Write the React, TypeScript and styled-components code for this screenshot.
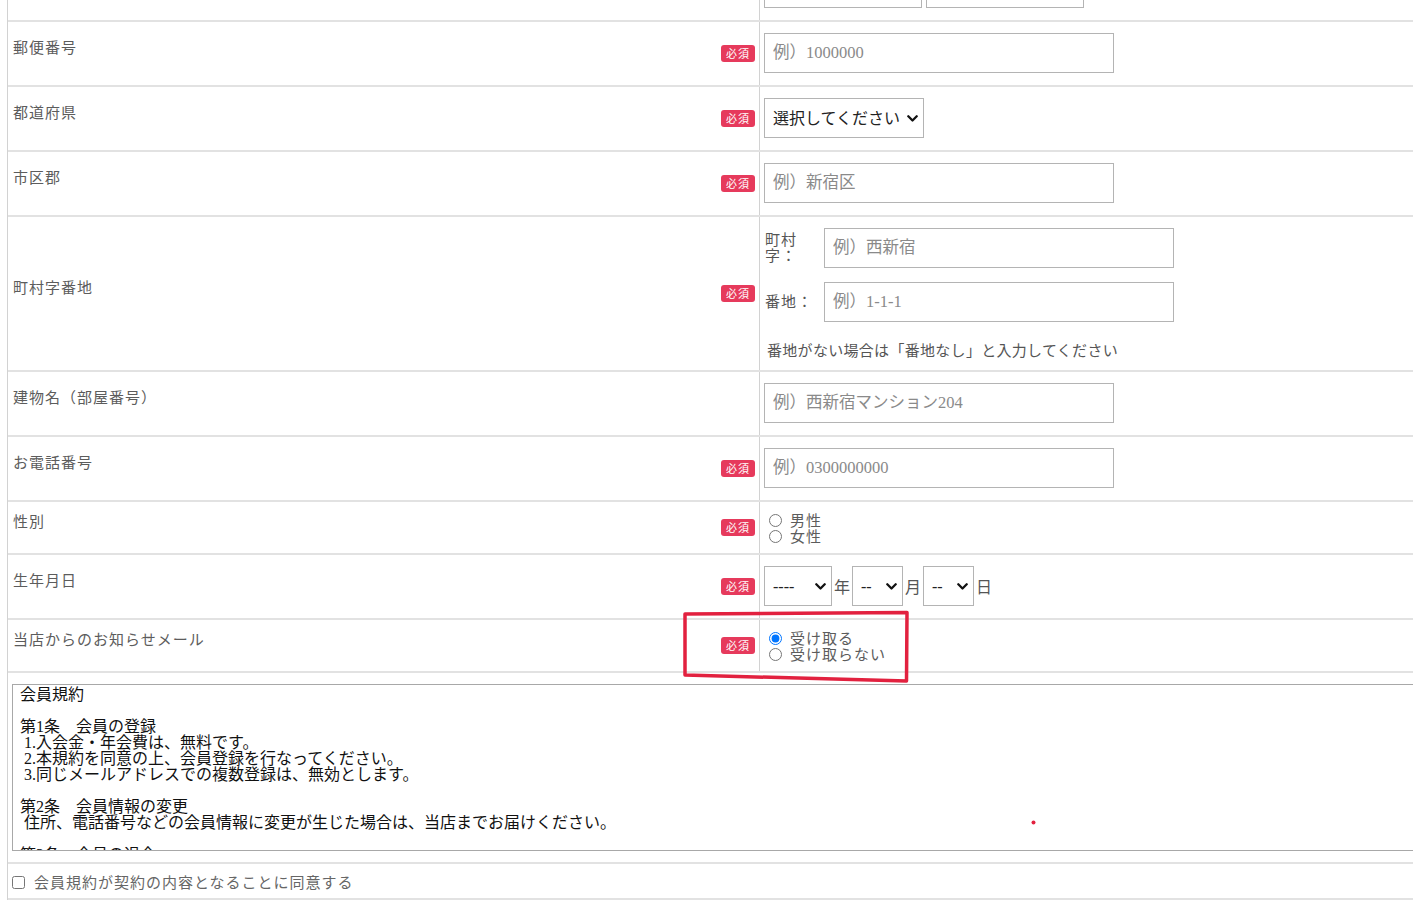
import { FC, ReactNode } from "react";
import styled, { createGlobalStyle } from "styled-components";

const GlobalStyle = createGlobalStyle`
  html, body {
    margin: 0;
    padding: 0;
    background: #fff;
  }
  body {
    font-family: "Liberation Serif", "Noto Sans CJK JP", serif;
    overflow: hidden;
  }
`;

const TERMS = `会員規約

第1条　会員の登録
 1.入会金・年会費は、無料です。
 2.本規約を同意の上、会員登録を行なってください。
 3.同じメールアドレスでの複数登録は、無効とします。

第2条　会員情報の変更
 住所、電話番号などの会員情報に変更が生じた場合は、当店までお届けください。

第3条　会員の退会
 会員が退会を希望する場合は、当店までご連絡ください。`;

const chevron =
  "url(\"data:image/svg+xml;utf8,<svg xmlns='http://www.w3.org/2000/svg' width='11' height='7' viewBox='0 0 11 7'><path d='M1.3 1.3 L5.5 5.5 L9.7 1.3' fill='none' stroke='%23111' stroke-width='2.3' stroke-linecap='round' stroke-linejoin='round'/></svg>\")";

const Page = styled.div`
  position: relative;
  width: 1413px;
  height: 913px;
  overflow: hidden;
`;

const FormTable = styled.div`
  margin: -43px 0 0 7px;
  width: 1440px;
  border-left: 1px solid #d2d2d2;
`;

const Row = styled.div<{ $h: number }>`
  display: grid;
  grid-template-columns: 752px 1fr;
  height: ${(p) => p.$h}px;
  box-sizing: border-box;
  border-bottom: 2px solid #e2e2e2;
`;

const LabelCell = styled.div`
  display: flex;
  align-items: center;
  justify-content: space-between;
  padding: 0 4px 0 5px;
  border-right: 1px solid #d2d2d2;
`;

const LabelText = styled.span`
  font-size: 15px;
  line-height: 16px;
  letter-spacing: 1px;
  color: #5c5c5c;
  padding-bottom: 12px;
`;

const Badge = styled.span`
  display: flex;
  align-items: center;
  justify-content: center;
  width: 34px;
  height: 17px;
  margin-top: -1px;
  border-radius: 3px;
  background: #e63a5c;
  color: #fff;
  font-size: 11px;
  letter-spacing: 1px;
`;

const ValueCell = styled.div<{ $top?: boolean }>`
  display: flex;
  flex-direction: column;
  justify-content: ${(p) => (p.$top ? "flex-start" : "center")};
  align-items: flex-start;
  padding: ${(p) => (p.$top ? "11px 4px 0" : "0 4px 1px")};
`;

const Inline = styled.div<{ $gap?: number }>`
  display: flex;
  align-items: center;
  gap: ${(p) => p.$gap ?? 0}px;
`;

const TextInput = styled.input<{ $w?: number }>`
  box-sizing: border-box;
  width: ${(p) => p.$w ?? 350}px;
  height: 40px;
  margin: 0;
  padding: 0 8px;
  border: 1px solid #b4b4b4;
  border-radius: 0;
  font-family: inherit;
  font-size: 16.5px;
  color: #333;
  background: #fff;
  &::placeholder {
    color: #8a8a8a;
  }
`;

const Select = styled.select<{ $w: number }>`
  box-sizing: border-box;
  width: ${(p) => p.$w}px;
  height: 40px;
  margin: 0;
  padding: 0 18px 0 8px;
  border: 1px solid #b4b4b4;
  border-radius: 0;
  appearance: none;
  background: #fff ${chevron} no-repeat right 5px center;
  font-family: inherit;
  font-size: 16px;
  color: #222;
`;

const Unit = styled.span`
  font-size: 16px;
  color: #555;
`;

const SubLabel = styled.span`
  width: 55px;
  margin: 0 4px 0 1px;
  font-size: 15px;
  line-height: 16px;
  letter-spacing: 1px;
  color: #555;
`;

const AddressLine = styled.div`
  display: flex;
  align-items: center;
  & + & {
    margin-top: 14px;
  }
`;

const Note = styled.p`
  margin: 21px 0 0 3px;
  font-size: 15px;
  line-height: 16px;
  letter-spacing: 0.3px;
  color: #555;
`;

const Choice = styled.label`
  display: flex;
  align-items: center;
  height: 16px;
  font-size: 15px;
  letter-spacing: 1px;
  color: #5c5c5c;
  input {
    width: 13px;
    height: 13px;
    margin: 2px 8px 0 5px;
  }
`;

const TermsSection = styled.div`
  padding: 11px 0 11px 4px;
  border-bottom: 2px solid #e2e2e2;
`;

const Terms = styled.textarea`
  display: block;
  box-sizing: border-box;
  width: 1430px;
  height: 167px;
  margin: 0;
  padding: 2px 7px;
  border: 1px solid #a8a8a8;
  resize: none;
  overflow: hidden;
  font-family: "Liberation Serif", "Noto Sans CJK JP", serif;
  font-size: 16px;
  line-height: 16px;
  color: #111;
  background: #fff;
`;

const AgreeRow = styled.label`
  display: flex;
  align-items: center;
  height: 36px;
  box-sizing: border-box;
  padding: 0 0 0 4px;
  border-bottom: 2px solid #e2e2e2;
  font-size: 15px;
  letter-spacing: 1px;
  color: #666;
  input {
    width: 13px;
    height: 13px;
    margin: 3px 9px 0 0;
  }
`;

const Annotation = styled.svg`
  position: absolute;
  left: 0;
  top: 0;
  pointer-events: none;
`;

const Field: FC<{ label?: string; h?: number; required?: boolean; top?: boolean; children: ReactNode }> = ({
  label,
  h = 65,
  required = true,
  top,
  children,
}) => (
  <Row $h={h}>
    <LabelCell>
      {label && <LabelText>{label}</LabelText>}
      {required && <Badge>必須</Badge>}
    </LabelCell>
    <ValueCell $top={top}>{children}</ValueCell>
  </Row>
);

const App: FC = () => {
  return (
    <>
      <GlobalStyle />
      <Page>
        <FormTable>
          <Field required={false}>
            <Inline $gap={4}>
              <TextInput $w={158} aria-label="姓" />
              <TextInput $w={158} aria-label="名" />
            </Inline>
          </Field>
          <Field label="郵便番号">
            <TextInput placeholder="例）1000000" />
          </Field>
          <Field label="都道府県">
            <Select $w={160} defaultValue="">
              <option value="">選択してください</option>
              <option value="tokyo">東京都</option>
            </Select>
          </Field>
          <Field label="市区郡">
            <TextInput placeholder="例）新宿区" />
          </Field>
          <Field label="町村字番地" h={155} top>
            <AddressLine>
              <SubLabel>町村字：</SubLabel>
              <TextInput placeholder="例）西新宿" />
            </AddressLine>
            <AddressLine>
              <SubLabel>番地：</SubLabel>
              <TextInput placeholder="例）1-1-1" />
            </AddressLine>
            <Note>番地がない場合は「番地なし」と入力してください</Note>
          </Field>
          <Field label="建物名（部屋番号）" required={false}>
            <TextInput placeholder="例）西新宿マンション204" />
          </Field>
          <Field label="お電話番号">
            <TextInput placeholder="例）0300000000" />
          </Field>
          <Field label="性別" h={53}>
            <Choice>
              <input type="radio" name="sex" />
              男性
            </Choice>
            <Choice>
              <input type="radio" name="sex" />
              女性
            </Choice>
          </Field>
          <Field label="生年月日">
            <Inline $gap={2}>
              <Select $w={68} defaultValue="">
                <option value="">----</option>
              </Select>
              <Unit>年</Unit>
              <Select $w={51} defaultValue="">
                <option value="">--</option>
              </Select>
              <Unit>月</Unit>
              <Select $w={51} defaultValue="">
                <option value="">--</option>
              </Select>
              <Unit>日</Unit>
            </Inline>
          </Field>
          <Field label="当店からのお知らせメール" h={53}>
            <Choice>
              <input type="radio" name="mail" defaultChecked />
              受け取る
            </Choice>
            <Choice>
              <input type="radio" name="mail" />
              受け取らない
            </Choice>
          </Field>
          <TermsSection>
            <Terms readOnly defaultValue={TERMS} />
          </TermsSection>
          <AgreeRow>
            <input type="checkbox" />
            会員規約が契約の内容となることに同意する
          </AgreeRow>
        </FormTable>
        <Annotation width="1413" height="913" viewBox="0 0 1413 913">
          <path
            d="M685 614 L907 612.5 L906.5 681 L685 675 Z"
            fill="none"
            stroke="#e2213f"
            strokeWidth="3.5"
            strokeLinejoin="round"
          />
          <circle cx="1033.5" cy="822.5" r="2" fill="#e2213f" />
        </Annotation>
      </Page>
    </>
  );
};

export default App;
